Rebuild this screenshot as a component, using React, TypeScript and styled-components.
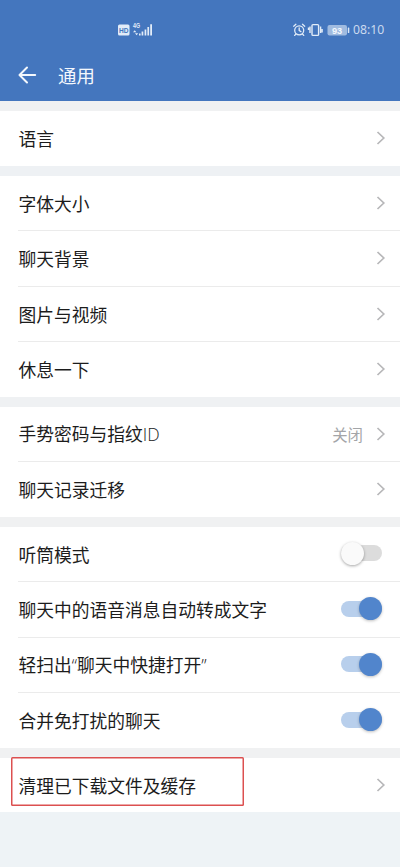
import React from 'react';
import styled, { createGlobalStyle } from 'styled-components';

const GlobalStyle = createGlobalStyle`
  * { box-sizing: border-box; }
  body { margin: 0; background: #eef3f6; }
`;

const Page = styled.div`
  width: 400px;
  height: 867px;
  overflow: hidden;
  display: flex;
  flex-direction: column;
  background: #eef3f6;
  font-family: "Noto Sans CJK SC", sans-serif;
  color: #1c1c1c;
`;

const Header = styled.header`
  height: 101px;
  flex: none;
  background: #4476be;
  color: #f4f8fd;
`;

const StatusBar = styled.div`
  height: 49px;
  padding: 10px 16px 0 117px;
  display: flex;
  align-items: center;
  justify-content: space-between;
`;

const StatusGroup = styled.div`
  display: flex;
  align-items: center;
`;

const Clock = styled.span`
  width: 31px;
  margin-left: 3px;
  font: 400 12.2px/16px "Noto Sans", sans-serif;
  white-space: nowrap;
  color: #cbdaef;
`;

const TitleBar = styled.div`
  height: 51px;
  padding-left: 18px;
  display: flex;
  align-items: center;
`;

const Title = styled.h1`
  margin: 0 0 0 21px;
  font-size: 18.4px;
  line-height: 26px;
  font-weight: 400;
`;

const Section = styled.section<{ $gap?: string }>`
  flex: none;
  border-top: 10px solid ${(p) => p.$gap ?? '#f0f1f2'};
  background: #fff;
`;

const Row = styled.div`
  height: 54.5px;
  padding: 0 14px 0 18.5px;
  display: flex;
  align-items: center;
  justify-content: space-between;
`;

const Divider = styled.div`
  height: 1px;
  margin-left: 18px;
  background: #ebebeb;
`;

const Label = styled.span`
  font-size: 17.75px;
  line-height: 26px;
  white-space: nowrap;
`;

const Latin = styled.span`
  font-family: "Open Sans", sans-serif;
  font-weight: 300;
  font-size: 17.6px;
`;

const Highlight = styled.div`
  width: 233px;
  height: 49px;
  margin-left: -7.5px;
  margin-top: -6px;
  padding: 7px 0 0 7.5px;
  display: flex;
  align-items: center;
  border-radius: 1.5px;
  box-shadow: inset 0 0 0 1.5px #dc5050;
`;

const Side = styled.div`
  display: flex;
  align-items: center;
`;

const Value = styled.span`
  margin-right: 13px;
  font-size: 15.4px;
  line-height: 22px;
  color: #a3a5a8;
`;

const Track = styled.div<{ $on: boolean }>`
  width: 41px;
  height: 16px;
  margin-right: 4px;
  margin-top: -1px;
  border-radius: 8px;
  display: flex;
  align-items: center;
  justify-content: ${(p) => (p.$on ? 'flex-end' : 'flex-start')};
  background: ${(p) => (p.$on ? '#b8cfec' : '#dcdcdc')};
`;

const Thumb = styled.div<{ $on: boolean }>`
  width: 23px;
  height: 23px;
  flex: none;
  border-radius: 50%;
  background: ${(p) => (p.$on ? '#5185cc' : '#fafafa')};
  box-shadow: 0 1px 3px rgba(0, 0, 0, ${(p) => (p.$on ? 0.25 : 0.35)});
`;

const Chevron = () => (
  <svg width="10" height="14" viewBox="0 0 10 14" fill="none" stroke="#b7b7b9" strokeWidth="1.7">
    <path d="M1.5 1L7.8 7L1.5 13" />
  </svg>
);

const Toggle = ({ on }: { on: boolean }) => (
  <Track $on={on} role="switch" aria-checked={on}>
    <Thumb $on={on} />
  </Track>
);

const SignalText = styled.text`
  font-family: "Liberation Sans", sans-serif;
  font-weight: 700;
`;

const NetworkIcons = () => (
  <svg width="38" height="14" viewBox="0 0 38 14" fill="#e2ecf8">
    <rect x="1" y="1.5" width="11.5" height="11" rx="1.5" />
    <SignalText x="2" y="9.8" fontSize="7.4" textLength="9.5" lengthAdjust="spacingAndGlyphs" fill="#4476be">HD</SignalText>
    <SignalText x="16" y="5.4" fontSize="6.6" textLength="7" lengthAdjust="spacingAndGlyphs">4G</SignalText>
    <path d="M16 9.3l1.7-2 1.7 2zM18 10.3h3.2l-1.6 2zM22 10.5h1.6v2H22zM24.6 8.5h1.7v4h-1.7zM27.6 6.5h1.7v6h-1.7zM30.4 4h1.7v8.5h-1.7zM33.2 1.2h1.8v11.3h-1.8z" />
  </svg>
);

const AlarmIcon = () => (
  <svg width="14" height="14" viewBox="0 0 14 14" fill="none" stroke="#e2ecf8" strokeWidth="1.3" strokeLinecap="round">
    <circle cx="6.2" cy="7.3" r="4.5" />
    <path d="M.7 3.2L2.9 1.3M11.7 3.2L9.5 1.3M6.2 4.8V7.5L7.9 8.6M2.9 11L1.7 12.4M9.5 11L10.7 12.4" />
  </svg>
);

const VibrateIcon = () => (
  <svg width="16" height="14" viewBox="0 0 16 14" fill="none" stroke="#e2ecf8" strokeWidth="1.4">
    <rect x="5" y="1.6" width="6.6" height="10.8" rx="1" />
    <path d="M3 3.5V10M1.5 4.5V7M13.6 3.5V10M15.1 6V9.5" />
  </svg>
);

const BatteryIcon = () => (
  <svg width="23" height="14" viewBox="0 0 23 14">
    <rect x="0.5" y="2" width="19.5" height="10.5" rx="2" fill="#a0bbe0" />
    <rect x="20.8" y="4.5" width="1.5" height="5.5" rx=".6" fill="#dde8f6" />
    <SignalText x="5" y="10.6" fontSize="9.2" fill="#f4f8fd">93</SignalText>
  </svg>
);

const BackIcon = () => (
  <svg width="19" height="18" viewBox="0 0 19 18" fill="none" stroke="#f4f8fd" strokeWidth="2" strokeLinecap="round" strokeLinejoin="round">
    <path d="M9 1.5L1.5 9L9 16.5M1.8 9H17.2" />
  </svg>
);

type Item = { label: React.ReactNode; value?: string; on?: boolean; boxed?: boolean };

const sections: { gap?: string; items: Item[] }[] = [
  { items: [{ label: '语言' }] },
  {
    gap: '#eef1f4',
    items: [{ label: '字体大小' }, { label: '聊天背景' }, { label: '图片与视频' }, { label: '休息一下' }],
  },
  {
    gap: '#eff1f3',
    items: [{ label: <>手势密码与指纹<Latin>ID</Latin></>, value: '关闭' }, { label: '聊天记录迁移' }],
  },
  {
    items: [
      { label: '听筒模式', on: false },
      { label: '聊天中的语音消息自动转成文字', on: true },
      { label: <>轻扫出<Latin>“</Latin>聊天中快捷打开<Latin>”</Latin></>, on: true },
      { label: '合并免打扰的聊天', on: true },
    ],
  },
  { items: [{ label: '清理已下载文件及缓存', boxed: true }] },
];

export default function App() {
  return (
    <>
      <GlobalStyle />
      <Page>
        <Header>
          <StatusBar>
            <NetworkIcons />
            <StatusGroup>
              <AlarmIcon />
              <VibrateIcon />
              &nbsp;
              <BatteryIcon />
              <Clock>08:10</Clock>
            </StatusGroup>
          </StatusBar>
          <TitleBar>
            <BackIcon />
            <Title>通用</Title>
          </TitleBar>
        </Header>
        {sections.map((section, s) => (
          <Section key={s} $gap={section.gap}>
            {section.items.map((item, i) => (
              <React.Fragment key={i}>
                {i > 0 && <Divider />}
                <Row>
                  {item.boxed ? (
                    <Highlight>
                      <Label>{item.label}</Label>
                    </Highlight>
                  ) : (
                    <Label>{item.label}</Label>
                  )}
                  {item.on === undefined ? (
                    <Side>
                      {item.value && <Value>{item.value}</Value>}
                      <Chevron />
                    </Side>
                  ) : (
                    <Toggle on={item.on} />
                  )}
                </Row>
              </React.Fragment>
            ))}
          </Section>
        ))}
      </Page>
    </>
  );
}
